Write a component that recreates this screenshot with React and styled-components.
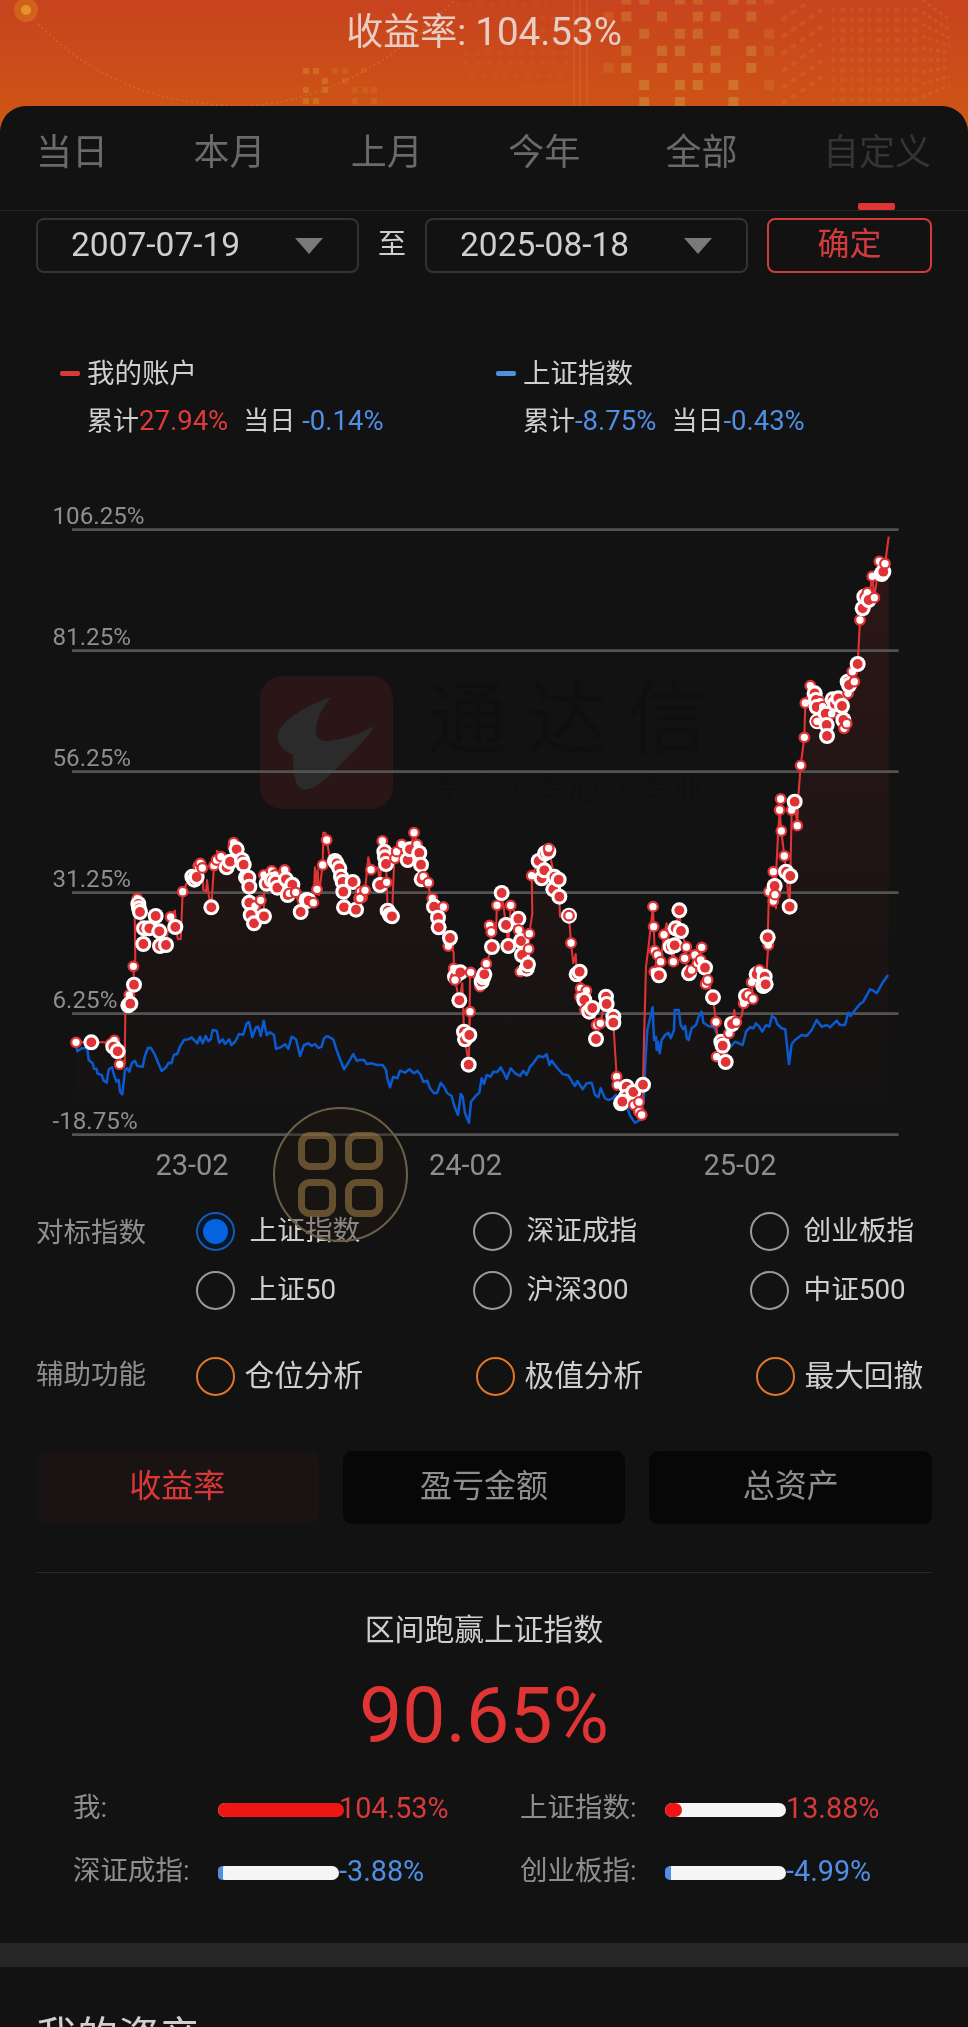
import styled, { createGlobalStyle, css } from "styled-components";

const TABS = ["当日", "本月", "上月", "今年", "全部", "自定义"];

const INDEXES = ["上证指数", "深证成指", "创业板指", "上证50", "沪深300", "中证500"];

const TOOLS = ["仓位分析", "极值分析", "最大回撤"];

const MODES = ["收益率", "盈亏金额", "总资产"];

const STATS = [
  { name: "我", value: 104.53 },
  { name: "上证指数", value: 13.88 },
  { name: "深证成指", value: -3.88 },
  { name: "创业板指", value: -4.99 },
];

// s = small mark, b = big mark, n = plain vertex of the line
const ACCOUNT = [
  {
    x: 40,
    y: 290,
    points:
      "s108,787 b154,787 n205,787 s212,792 s223,781 b220,800 b233,814 s239,853 n254,850 n256,700 s268,645 b265,676 b271,671 b282,614 n281,585 s280,559 n286,540 n284,400 s292,356 b295,372 b297,385 b300,396 s302,445 b312,445 b310,492 b328,445 b347,408 b358,454 b360,498 b378,495 n385,440 s392,411 n405,392 b406,441 n414,478 n422,478 s428,335 n440,310 b457,290 b463,299 s475,258 b470,291 s481,250 s487,264 n490,330 n498,335 n501,300 n506,345 b514,382 s522,257 s530,240 n531,212 s543,230 b560,262 b570,245 s580,200 s581,188 b590,208 b606,240 b611,254 b618,292 b625,293 b628,320 b628,368 s645,378 s662,361 b632,405 b642,430 b672,409 s672,285 s676,308 s695,273 b680,311 s705,285 b695,300 b706,305 b712,323 s734,270 b738,298 b757,314 b743,345 s748,340 s767,337 b782,396 b800,360 b806,362 s820,368 n825,262 s831,328 n833,270 n836,345 s848,255 n850,158 n856,158 s860,180 n868,225 b885,243 b890,250 b898,265 b903,290 b908,306 b910,335 b938,306 b912,382 b948,389 s957,355",
  },
  {
    x: 340,
    y: 290,
    points:
      "s62,335 s66,352 s60,355 s75,331 n85,232 s93,269 n114,262 b120,315 s127,183 b133,215 b135,232 b138,252 s140,307 b143,392 b150,405 b156,409 n162,255 s165,235 s170,215 s185,193 b203,240 b210,208 n218,175 s222,158 s231,193 b238,219 b243,254 b245,298 s250,290 s265,308 n270,345 s277,355 b282,380 s310,381 b294,413 b296,442 s325,498 b330,474 n341,520 s341,565 b345,590 b361,577 s345,600 b358,661 n367,610 b372,755 b375,778 b386,854 s390,695 b388,765 n390,600 s392,577 s420,620 b425,605 b430,592 b433,583 s439,551 b456,501 s449,436 s454,456 n468,450 s471,376 b485,339 b498,435 b505,498 s512,376 b535,416 s536,450 b543,483 b546,525 s566,507 s541,575 b560,566 b564,553 s568,461 n577,400 s575,287 b596,243 b605,295 b613,271 b615,220 b625,215 s626,205 b643,290 b640,328 b656,299 b658,350 n660,410 b687,407 s687,407 s693,489 n700,550 n707,522 b710,583 b719,575 s722,625 s739,632 s720,650 b733,660 s735,690 b748,695 b757,684 s770,735 b768,777 s781,730 b798,650 b800,672 b820,710 b820,728 s830,890 s832,915 b860,920 b858,950 b843,970 b847,965 b880,936 s882,975 s897,966 s897,995 s905,1005 b909,914 n912,780 n918,560 n925,505",
  },
  {
    x: 640,
    y: 290,
    points:
      "s39,380 s41,440 s44,512 s53,525 s43,575 s62,545 b57,586 s72,464 n80,430 s85,490 b92,500 s100,545 b104,496 b107,445 b118,391 b123,453 s139,501 s134,535 b147,580 s155,570 s165,525 s172,550 s185,502 s182,540 b195,563 s197,612 s203,600 b219,652 s228,726 n232,770 b244,785 s230,830 b248,797 b257,846 s267,760 b276,732 n283,690 s289,726 n305,708 s311,670 b318,648 s325,645 s339,657 s335,607 b350,583 s358,570 b374,590 b370,618 b377,613 s385,495 b383,472 s387,335 s400,363 s400,275 b404,318 n408,385 s405,344 n415,150 s422,57 s419,90 s424,153 s433,228 b438,275 b449,380 b451,288 s455,90 b464,65 s472,137",
  },
  {
    x: 640,
    y: 10,
    points:
      "n473,940 n475,890 s482,796 s493,712 s496,609 s511,557 b524,580 b528,600 s540,605 b530,621 b532,664 s531,664 s548,620 b557,641 s575,641 b560,675 b561,708 b578,598 b585,612 b595,595 b606,618 b610,660 s612,685 s620,671 b623,545 s624,580 b627,555 s637,515 s643,545 b653,492 s660,360 b668,325 b673,290 s682,278 b686,300 s697,229 s703,293 s718,184 b725,222 b730,215 s735,191 n738,170 n746,110",
  },
];

const BENCHMARK = [
  {
    x: 40,
    y: 290,
    points:
      "n108,790 n112,814 n125,805 n142,805 n146,840 n158,850 n162,866 n170,866 n172,880 n185,885 n190,900 n200,908 n206,868 n216,862 n222,885 n230,905 n236,900 n240,935 n247,943 n255,870 n262,865 n268,875 n275,850 n285,842 n292,858 n308,860 n314,830 n324,803 n334,805 n345,825 n355,850 n365,873 n378,862 n386,848 n394,850 n402,824 n412,822 n420,800 n432,780 n445,778 n455,772 n464,782 n472,790 n480,770 n488,790 n497,768 n505,784 n512,778 n518,750 n530,752 n538,788 n548,778 n555,792 n568,778 n574,795 n585,786 n597,762 n610,764 n620,730 n627,726 n637,772 n648,742 n655,740 n662,768 n671,722 n680,765 n690,757 n702,765 n708,806 n722,802 n735,793 n745,806 n755,770 n768,778 n780,828 n792,795 n805,790 n815,798 n825,792 n835,804 n845,800 n852,775 n862,768 n880,778 n888,805 n900,838 n912,868 n925,848 n940,822 n950,842",
  },
  {
    x: 340,
    y: 290,
    points:
      "n60,840 n72,840 n80,852 n95,850 n110,855 n128,855 n138,870 n142,895 n150,922 n160,890 n172,895 n180,872 n195,878 n208,868 n222,880 n232,872 n242,885 n250,905 n262,902 n270,925 n282,940 n292,938 n302,908 n312,920 n322,940 n335,948 n342,975 n354,1005 n362,942 n368,950 n375,1000 n387,1028 n393,965 n405,950 n418,938 n425,895 n432,912 n440,885 n452,890 n460,875 n472,876 n482,862 n492,880 n500,897 n512,865 n525,880 n540,888 n550,872 n560,885 n570,860 n580,850 n595,828 n610,832 n620,823 n628,855 n635,842 n650,862 n668,883 n685,886 n698,908 n705,918 n712,903 n728,928 n740,910 n755,908 n765,945 n775,952 n782,925 n795,955 n805,960 n818,955 n828,945 n845,975 n862,985 n872,1010 n885,1028 n900,1020 n912,950 n916,850",
  },
  {
    x: 640,
    y: 290,
    points:
      "n22,750 n38,682 n42,780 n48,770 n50,810 n54,785 n59,820 n65,780 n75,765 n85,758 n92,775 n102,750 n104,690 n116,690 n122,735 n130,748 n136,738 n140,775 n146,780 n155,745 n168,735 n176,710 n185,695 n190,728 n205,738 n222,742 n245,790 n272,800 n285,785 n308,795 n318,755 n330,742 n340,745 n348,730 n358,740 n367,755 n378,735 n388,740 n396,708 n406,715 n412,732 n425,745 n436,748 n447,852 n455,792 n465,780 n485,765 n500,768 n515,750 n530,720 n545,740 n560,735 n570,742 n590,722 n600,735 n615,735 n625,698 n632,708 n645,690 n660,672 n670,665 n690,628 n700,632 n710,640 n720,622 n730,605 n744,585",
  },
];

const readSeries = (parts) =>
  parts.flatMap((part) =>
    part.points.split(" ").map((item) => {
      const [x, y] = item.slice(1).split(",").map(Number);
      return { kind: item[0], x: part.x + x / 3, y: part.y + y / 3 };
    })
  );

const toLine = (series) =>
  series.map((p) => `${p.x.toFixed(1)},${p.y.toFixed(1)}`).join(" ");

const account = readSeries(ACCOUNT);
const benchmark = readSeries(BENCHMARK);

const Y_LABELS = ["106.25%", "81.25%", "56.25%", "31.25%", "6.25%", "-18.75%"];
const X_LABELS = [
  [192, "23-02"],
  [465.5, "24-02"],
  [740, "25-02"],
];

// lit squares of the banner, one string per row
const BLOCKS = [
  "0110110111",
  "1101011010",
  "0010110101",
  "0101101011",
  "1101011010",
  "0010110101",
  "0010100100",
];

const BannerArt = () => {
  return (
    <Art viewBox="0 0 968 130">
      <circle cx="26" cy="10" r="12" fill="#d9741c" opacity="0.6" />
      <circle cx="26" cy="10" r="5" fill="#e39a2a" opacity="0.9" />
      <path
        d="M38 24C90 75 150 104 240 106C330 104 400 55 455 0"
        fill="none"
        stroke="#d98234"
        strokeWidth="1.5"
        strokeDasharray="2 3"
        opacity="0.5"
      />
      {BLOCKS.map((row, r) =>
        row
          .split("")
          .map(
            (on, c) =>
              on === "1" && (
                <rect
                  key={`${r}-${c}`}
                  x={603.5 + c * 17.85}
                  y={-5.5 + r * 17.1}
                  width="10"
                  height="10"
                  fill="#cf8233"
                  opacity={c === 0 || c === 9 ? 0.3 : 0.45 + r * 0.05}
                />
              )
          )
      )}
      <g fill="#d08a2c" opacity="0.5">
        <path d="M303 68h6v6h-6zM313 68h6v6h-6zM322 78h6v6h-6zM303 87h6v6h-6zM322 87h6v6h-6zM303 98h6v6h-6zM313 98h6v6h-6z" />
        <path
          d="M332 68h6v6h-6zM342 68h6v6h-6zM342 78h6v6h-6zM352 87h6v6h-6zM362 87h6v6h-6zM371 87h6v6h-6zM352 98h6v6h-6zM371 98h6v6h-6zM361 68h5v5h-5z"
          opacity="0.5"
        />
      </g>
      <g stroke="#d98040" opacity="0.24" fill="none">
        <path d="M574 0V106M580 0V106M587 0V106" strokeWidth="2" />
        <path
          d="M456 5H548M540 18H568M540 30H568M540 42H568M464 53H568M464 63H568M470 75H568M520 87H568"
          strokeWidth="4"
          strokeDasharray="5 6"
          opacity="0.5"
        />
        <path
          d="M782 20l24-16M782 37l40-27M782 54l40-27M782 71l40-27M782 88l40-27M782 104l40-27"
          strokeWidth="4"
          strokeDasharray="6 5"
        />
        <path
          d="M832 10H920M832 20H920M832 30H920M832 40H920M832 50H920M832 60H920M832 70H920M832 80H920M832 90H920M832 100H920"
          strokeWidth="5"
          strokeDasharray="3 5 6 4"
          opacity="0.75"
        />
        <path
          d="M922 0l28 20M922 12l28 18M922 24l28 14M922 36l28 10M922 48l28 5M922 60h28M922 72l28-5M922 84l28-8M922 97l28-12"
          strokeWidth="3"
          strokeDasharray="4 3"
        />
      </g>
    </Art>
  );
};

const Chart = () => {
  const line = toLine(account);

  return (
    <ChartSvg viewBox="0 0 968 700">
      <defs>
        <linearGradient id="area" gradientUnits="userSpaceOnUse" x1="0" y1="40" x2="0" y2="644">
          <stop offset="0" stopColor="#e13535" stopOpacity="0.14" />
          <stop offset="1" stopColor="#e13535" stopOpacity="0" />
        </linearGradient>
      </defs>

      <g>
        <rect x="260" y="186" width="133" height="133" rx="22" fill="#2a1616" />
        <path
          transform="translate(240 150) scale(0.33333)"
          d="M273 172C200 195 113 245 113 292C115 320 135 335 160 345C158 380 160 440 190 449C230 450 270 405 300 375C345 330 385 290 405 258C360 280 310 300 260 303C235 303 228 290 228 270C230 230 255 195 273 172Z"
          fill="#2b2b2b"
        />
        <Watermark x="427" y="257" $size={80} $gap={20}>
          通达信
        </Watermark>
        <Watermark x="430" y="309" $size={31} $gap={2} $faint>
          专注
        </Watermark>
        <Watermark x="536" y="309" $size={31} $gap={2} $faint>
          专心
        </Watermark>
        <Watermark x="640" y="309" $size={31} $gap={2} $faint>
          专业
        </Watermark>
        <circle cx="516" cy="297" r="2.5" fill="#101010" />
        <circle cx="623" cy="297" r="2.5" fill="#101010" />
      </g>

      <polygon points={`${line} 888.7,644 76,644`} fill="url(#area)" />

      {Y_LABELS.map((label, i) => (
        <g key={label}>
          <line x1="72" x2="898.5" y1={39.6 + i * 121} y2={39.6 + i * 121} stroke="#535353" strokeWidth="2.6" />
          <AxisText x="52.5" y={33.8 + i * 121}>
            {label}
          </AxisText>
        </g>
      ))}
      {X_LABELS.map(([x, label]) => (
        <AxisText key={label} x={x} y="684.5" textAnchor="middle" $size={29}>
          {label}
        </AxisText>
      ))}

      <polyline points={toLine(benchmark)} fill="none" stroke="#0b5bd0" strokeWidth="2.5" strokeLinejoin="round" />
      <polyline points={line} fill="none" stroke="#df3336" strokeWidth="2.1" strokeLinejoin="round" />
      {account.map((p, i) => {
        if (p.kind === "s") {
          return <circle key={i} cx={p.x} cy={p.y} r="4.8" fill="#fff" stroke="#df3336" strokeWidth="2.3" />;
        }
        if (p.kind === "b") {
          return (
            <g key={i}>
              <circle cx={p.x} cy={p.y} r="8" fill="#fff" />
              <circle cx={p.x} cy={p.y} r="4.9" fill="#df3336" />
            </g>
          );
        }
        return null;
      })}
    </ChartSvg>
  );
};

const Stat = ({ name, value }) => {
  return (
    <StatItem>
      <StatName>{name}:</StatName>
      <Track>
        <Bar $up={value > 0} style={{ width: `${Math.abs(value)}%` }} />
      </Track>
      <StatValue $up={value > 0}>{value.toFixed(2)}%</StatValue>
    </StatItem>
  );
};

const App = () => {
  return (
    <>
      <GlobalStyle />
      <Page>
        <Banner>
          <BannerArt />
          <BannerText>
            收益率: <span>104.53%</span>
          </BannerText>
        </Banner>

        <Panel>
          <Tabs>
            {TABS.map((tab) => (
              <Tab key={tab} $active={tab === "自定义"}>
                {tab}
              </Tab>
            ))}
          </Tabs>

          <DateRow>
            <DateBox>
              2007-07-19 <Caret />
            </DateBox>
            <To>至</To>
            <DateBox>
              2025-08-18 <Caret />
            </DateBox>
            <Confirm>确定</Confirm>
          </DateRow>

          <Legend>
            <LegendItem>
              <Dash $color="#d63a3a" />
              <LegendName>我的账户</LegendName>
              <LegendValue>
                累计<Up>27.94%</Up>
                <Today $gap={7}>当日</Today>
                <Down>-0.14%</Down>
              </LegendValue>
            </LegendItem>
            <LegendItem>
              <Dash $color="#4f8fe0" />
              <LegendName>上证指数</LegendName>
              <LegendValue>
                累计<Down>-8.75%</Down>
                <Today $gap={0}>当日</Today>
                <Down>-0.43%</Down>
              </LegendValue>
            </LegendItem>
          </Legend>

          <Chart />

          <Options>
            <OptionTitle>对标指数</OptionTitle>
            <IndexGrid>
              {INDEXES.map((name, i) => (
                <Option key={name}>
                  <Radio $checked={i === 0} />
                  {name}
                </Option>
              ))}
            </IndexGrid>
          </Options>
          <Options $top={46}>
            <OptionTitle $raise>辅助功能</OptionTitle>
            <ToolGrid>
              {TOOLS.map((name) => (
                <Option key={name} $large>
                  <Radio $orange />
                  {name}
                </Option>
              ))}
            </ToolGrid>
          </Options>

          <Modes>
            {MODES.map((mode, i) => (
              <Mode key={mode} $active={i === 0}>
                {mode}
              </Mode>
            ))}
          </Modes>

          <Divider />
          <Caption>区间跑赢上证指数</Caption>
          <Beat>90.65%</Beat>

          <Stats>
            {STATS.map((stat) => (
              <Stat key={stat.name} {...stat} />
            ))}
          </Stats>

          <Separator />
          <Heading>我的资产</Heading>
        </Panel>

        <FloatButton>
          <Cell />
          <Cell />
          <Cell />
          <Cell />
        </FloatButton>
      </Page>
    </>
  );
};

const GlobalStyle = createGlobalStyle`
  body {
    margin: 0;
    background: #121212;
  }

  * {
    box-sizing: border-box;
  }
`;

const Page = styled.div`
  position: relative;
  width: 968px;
  height: 2027px;
  overflow: hidden;
  background: linear-gradient(#c8431f 0, #cd5316 106px, #d25c12 132px);
  font-family: Roboto, "Noto Sans CJK SC", sans-serif;
  color: #cfcfcf;
`;

const Banner = styled.header`
  position: relative;
  height: 106px;
`;

const Art = styled.svg`
  position: absolute;
  top: 0;
  left: 0;
  width: 968px;
  height: 130px;
`;

const BannerText = styled.div`
  position: relative;
  text-align: center;
  font-size: 37px;
  line-height: 63px;
  color: #e8cdc5;

  & > span {
    font-size: 38.5px;
  }
`;

const Panel = styled.main`
  position: relative;
  height: 1921px;
  overflow: hidden;
  background: #121212;
  border-radius: 26px 26px 0 0;
`;

const Tabs = styled.nav`
  display: flex;
  justify-content: space-between;
  height: 105px;
  padding: 0 37px 0 36px;
  border-bottom: 1px solid #242424;
`;

const Tab = styled.div`
  display: flex;
  flex-direction: column;
  align-items: center;
  font-size: 36px;
  line-height: 95px;
  color: #6a6a6a;

  ${(props) =>
    props.$active &&
    css`
      color: #343434;

      &::after {
        content: "";
        width: 37px;
        height: 7px;
        margin-top: 2px;
        border-radius: 2px;
        background: #e13535;
      }
    `}
`;

const DateRow = styled.div`
  display: flex;
  height: 62px;
  padding: 7px 36px 0;
`;

const DateBox = styled.div`
  display: flex;
  align-items: center;
  justify-content: space-between;
  width: 323px;
  padding: 0 34px 3px 33px;
  border: 2px solid #333;
  border-radius: 8px;
  font-size: 33.5px;
`;

const Caret = styled.i`
  border: 14px solid transparent;
  border-top: 16px solid #7a7a7a;
  border-bottom: 0;
  margin-top: 4px;
`;

const To = styled.span`
  width: 66px;
  text-align: center;
  font-size: 28px;
  line-height: 53px;
`;

const Confirm = styled.button`
  width: 165px;
  margin-left: auto;
  padding: 0 0 3px;
  border: 2px solid #d23b3b;
  border-radius: 8px;
  background: none;
  font: inherit;
  font-size: 32px;
  line-height: 46px;
  color: #d23b3b;
`;

const Legend = styled.div`
  display: flex;
  margin-top: 80px;
  padding-left: 60px;
`;

const LegendItem = styled.div`
  display: grid;
  grid-template-columns: 27px 1fr;
  grid-template-rows: 40px 40px;
  row-gap: 7px;
  align-items: center;
  width: 436px;
`;

const Dash = styled.i`
  width: 20px;
  height: 5px;
  border-radius: 2px;
  background: ${(props) => props.$color};
`;

const LegendName = styled.div`
  margin-top: 2px;
  font-size: 27.5px;
  line-height: 40px;
`;

const LegendValue = styled.div`
  grid-column: 2;
  margin-top: 2px;
  font-size: 26px;
  line-height: 40px;
  white-space: nowrap;
`;

const Up = styled.span`
  font-size: 27.5px;
  color: #e03a3a;
`;

const Down = styled.span`
  font-size: 27.5px;
  color: #4f8fe6;
`;

const Today = styled.span`
  margin: 0 ${(props) => props.$gap}px 0 15px;
`;

const ChartSvg = styled.svg`
  display: block;
  width: 968px;
  height: 700px;
  margin-top: 50px;
`;

const AxisText = styled.text`
  font-family: Roboto, sans-serif;
  font-size: ${(props) => props.$size || 24.2}px;
  fill: #8e8e8e;
`;

const Watermark = styled.text`
  font-family: "Noto Sans CJK SC", sans-serif;
  font-size: ${(props) => props.$size}px;
  letter-spacing: ${(props) => props.$gap}px;
  fill: ${(props) => (props.$faint ? "#101010" : "#0f0f0f")};
`;

const Options = styled.div`
  display: grid;
  grid-template-columns: 160px 1fr;
  margin-top: ${(props) => props.$top || 21}px;
  padding-left: 36px;
`;

const OptionTitle = styled.div`
  font-size: 27.5px;
  line-height: ${(props) => (props.$raise ? 37 : 44)}px;
  height: 40px;
  color: #8e8e8e;
`;

const IndexGrid = styled.div`
  display: grid;
  grid-template-columns: repeat(3, 277px);
  row-gap: 19px;
`;

const ToolGrid = styled.div`
  display: grid;
  grid-template-columns: repeat(3, 280px);
`;

const Option = styled.label`
  display: flex;
  align-items: center;
  gap: ${(props) => (props.$large ? 9.5 : 14.5)}px;
  height: 40px;
  font-size: ${(props) => (props.$large ? 29.7 : 27.7)}px;
  line-height: 40px;
  white-space: nowrap;
`;

const Radio = styled.i`
  width: 39px;
  height: 39px;
  border: 2px solid ${(props) => (props.$orange ? "#e0762a" : "#9a9a9a")};
  border-radius: 50%;

  ${(props) =>
    props.$checked &&
    css`
      border-color: #1459b5;
      background: radial-gradient(circle, #0563e0 12px, #0b1626 13px);
    `}
`;

const Modes = styled.div`
  display: grid;
  grid-template-columns: repeat(3, 1fr);
  gap: 24px;
  margin: 55px 36px 0;
`;

const Mode = styled.button`
  height: 73px;
  padding: 0 0 10px;
  border: 0;
  border-radius: 9px;
  background: ${(props) => (props.$active ? "#1a1313" : "#070707")};
  font: inherit;
  font-size: 32px;
  color: ${(props) => (props.$active ? "#dc3737" : "#8e8e8e")};
`;

const Divider = styled.hr`
  height: 1px;
  margin: 48px 36px 0;
  border: 0;
  background: #282828;
`;

const Caption = styled.div`
  margin-top: 37px;
  text-align: center;
  font-size: 29.8px;
  line-height: 40px;
`;

const Beat = styled.div`
  margin-top: 26px;
  text-align: center;
  font-size: 77px;
  line-height: 80px;
  color: #e13535;
`;

const Stats = styled.div`
  display: grid;
  grid-template-columns: 447px 1fr;
  row-gap: 23px;
  margin-top: 32px;
  padding-left: 73px;
`;

const StatItem = styled.div`
  display: flex;
  align-items: center;
  height: 40px;
  line-height: 42px;
  font-size: 28.8px;
`;

const StatName = styled.span`
  width: 145px;
  font-size: 27.5px;
  color: #8e8e8e;
`;

const Track = styled.div`
  width: 121px;
  height: 14px;
  margin-top: 3px;
  border-radius: 7px;
  background: #f5f5f5;
`;

const Bar = styled.div`
  height: 14px;
  border-radius: ${(props) => (props.$up ? "7px" : "7px 0 0 7px / 5px 0 0 5px")};
  background: ${(props) => (props.$up ? "#ef1515" : "#4f8fe6")};
`;

const StatValue = styled.span`
  position: relative;
  color: ${(props) => (props.$up ? "#d63a3a" : "#4f8fe6")};
`;

const Separator = styled.div`
  height: 24px;
  margin-top: 52px;
  background: #262626;
`;

const Heading = styled.h2`
  margin: 40px 0 0;
  padding-left: 36px;
  font-size: 41px;
  font-weight: 400;
  line-height: 60px;
`;

const FloatButton = styled.div`
  position: absolute;
  left: 273px;
  top: 1107px;
  display: grid;
  grid-template-columns: 38px 38px;
  grid-template-rows: 38px 38px;
  gap: 9px;
  place-content: center;
  width: 135px;
  height: 135px;
  border: 2px solid #6b5f47;
  border-radius: 50%;
  background: rgba(34, 26, 18, 0.4);
`;

const Cell = styled.i`
  border: 7px solid rgba(160, 128, 70, 0.56);
  border-radius: 12px;
`;

export default App;
